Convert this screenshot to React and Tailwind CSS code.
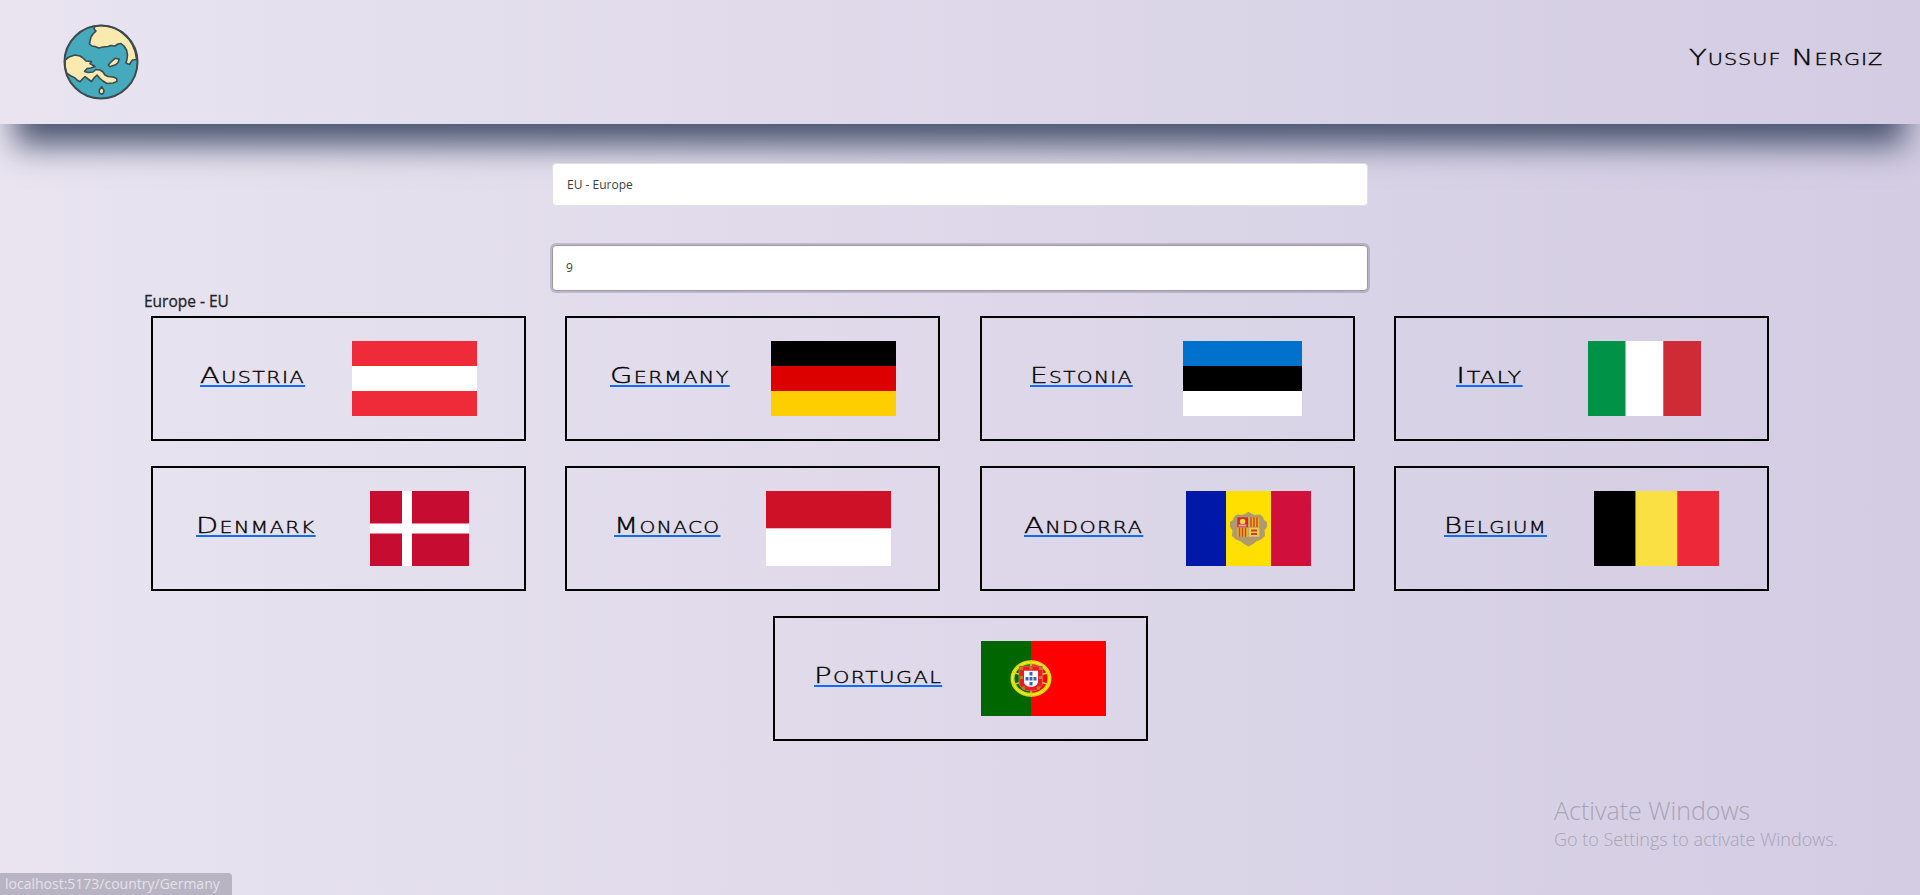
import React from "react";

const FONT = "font-['DejaVu_Sans',sans-serif] font-extralight [font-variant:small-caps] [-webkit-text-stroke:0.35px_black] text-black whitespace-nowrap";

function Globe() {
  return (
    <svg width="76" height="76" viewBox="0 0 76 76" className="block">
      <circle cx="38" cy="38" r="36.5" fill="#45aabb" />
      <g fill="#faeab0" stroke="#3d4a52" strokeWidth="1.6" strokeLinejoin="round">
        <path d="M32 2 L31 5 L33 7 L30 10 L28 13 L27 17 L26.500 20 L29 22 L32 22.500 L36 24 L40 23 L45 22.500 L48 21.500 L52 22 L55 20 L58 19.500 L61 22 L63.500 26 L64.500 31 L64 35 L63 39 L66.500 40.500 L68 38 L69.500 36 L73.500 35.500 A36 36 0 0 0 32 2Z" />
        <path d="M2 36 L6 33 L9 32 L12 31 L17 32 L20 34 L23 37 L28.500 37.500 L27 39.500 L32 42.500 L28 44 L24 44.500 L21.500 47.500 L25 48.500 L30 48 L33 45.500 L37 46 L40 48 L42 51 L45 52.500 L50 53 L53.700 54.500 L54 57.500 L50 59 L44 59.500 L40 57 L37 54.500 L34 51 L31 54 L28.500 57.500 L25 55 L22 52.700 L19.500 55 L17 57.700 L14 56 L12 54 L8 52 L3.700 49.300 A36 36 0 0 1 2 36Z" />
        <path d="M45.300 41 L48 38 L52 34.300 L56.300 35.300 L55 38.500 L53 40.500 L47 42.700Z" />
        <path d="M36.300 66 L38.700 62.700 L41 66.700 L40.500 69 L38.700 70.300 L36.300 68.700Z" />
      </g>
      <circle cx="38" cy="38" r="36.5" fill="none" stroke="#3d4a52" strokeWidth="2" />
    </svg>
  );
}

const Stripes = ({ colors, w = 125 }) => (
  <svg width={w} height="75" viewBox={`0 0 ${w} 75`} className="block shrink-0">
    {colors.map((c, i) => (
      <rect key={i} x="0" y={i * 25} width={w} height="25" fill={c} />
    ))}
  </svg>
);

const Bars = ({ colors, w = 125 }) => (
  <svg width={w} height="75" viewBox={`0 0 ${w} 75`} className="block shrink-0">
    {colors.map((c, i) => (
      <rect key={i} x={(i * w) / colors.length} y="0" width={w / colors.length} height="75" fill={c} />
    ))}
  </svg>
);

const Denmark = () => (
  <svg width="99" height="75" viewBox="0 0 99 75" className="block shrink-0">
    <rect width="99" height="75" fill="#c60c30" />
    <rect x="32" width="10" height="75" fill="#fff" />
    <rect y="32.500" width="99" height="10" fill="#fff" />
  </svg>
);

const Monaco = () => (
  <svg width="125" height="75" viewBox="0 0 125 75" className="block shrink-0">
    <rect width="125" height="37.500" fill="#ce1126" />
    <rect y="37.500" width="125" height="37.500" fill="#fff" />
  </svg>
);

const Andorra = () => (
  <svg width="125" height="75" viewBox="0 0 125 75" className="block shrink-0">
    <rect width="40" height="75" fill="#0018a8" />
    <rect x="40" width="45" height="75" fill="#fedf00" />
    <rect x="85" width="40" height="75" fill="#d0103a" />
    <path d="M44 31 L47 29 L48 26 L51 23.500 L56 24 L59 23 L62.500 20.700 L66 23 L69 24 L74 23.500 L77 26 L78 29 L81 31 L81 36 L78.500 39 L79 45 L75 48.500 L70 50.500 L67 53 L62.500 55.500 L58 53 L55 50.500 L50 48.500 L46 45 L46.500 39 L44 36Z" fill="#ae9a6c" />
    <rect x="51.300" y="26.300" width="10.700" height="10" fill="#d8242c" />
    <circle cx="56.600" cy="30.500" r="2.800" fill="#f7d64a" />
    <rect x="52.500" y="33.500" width="8" height="2" fill="#e8a0a0" />
    <rect x="62.700" y="26.300" width="10.700" height="10" fill="#e9b21f" />
    <path d="M65 26.300v10M68 26.300v10M71 26.300v10" stroke="#c8432c" strokeWidth="1.400" />
    <rect x="51.300" y="36.700" width="10.700" height="9" fill="#e9b21f" />
    <path d="M53.500 36.700v9M56.500 36.700v9M59.500 36.700v9" stroke="#c8432c" strokeWidth="1.400" />
    <rect x="62.700" y="36.700" width="10.700" height="9" fill="#efc94c" />
    <path d="M65 39.500h6M65 43h6" stroke="#c8432c" strokeWidth="1.800" />
  </svg>
);

const Portugal = () => (
  <svg width="125" height="75" viewBox="0 0 125 75" className="block shrink-0">
    <rect width="50" height="75" fill="#006600" />
    <rect x="50" width="75" height="75" fill="#ff0000" />
    <ellipse cx="50" cy="37.500" rx="18.500" ry="16.300" fill="none" stroke="#d8d800" strokeWidth="4" />
    <ellipse cx="50" cy="37.500" rx="18.500" ry="16.300" fill="none" stroke="#f3ee50" strokeWidth="1" />
    <path d="M32 31q18 8 36 0M32 44q18-8 36 0M50 19v37" fill="none" stroke="#d8d800" strokeWidth="1.500" />
    <path d="M38 25h23.700v16c0 5.500-5 9-11.850 9s-11.850-3.500-11.850-9z" fill="#ed1c24" stroke="#c9a0a0" strokeWidth=".6" />
    <path d="M43 29.700h14v11c0 3-3 5-7 5s-7-2-7-5z" fill="#fff" />
    <g fill="#3a62b8">
      <rect x="48.500" y="31" width="3" height="3.500" />
      <rect x="44.500" y="36" width="3" height="3.500" />
      <rect x="48.500" y="36" width="3" height="3.500" />
      <rect x="52.500" y="36" width="3" height="3.500" />
      <rect x="48.500" y="41" width="3" height="3.500" />
    </g>
    <g fill="#b8860b">
      <rect x="39" y="26" width="3" height="3" />
      <rect x="48.500" y="25.500" width="3" height="3" />
      <rect x="58" y="26" width="3" height="3" />
      <rect x="39" y="35" width="3" height="3" />
      <rect x="58" y="35" width="3" height="3" />
      <rect x="41" y="45.500" width="3" height="3" />
      <rect x="56" y="45.500" width="3" height="3" />
    </g>
  </svg>
);

const countries = [
  { name: "Austria", width: "w-[105px]", scale: "scale-x-[1.38]", flag: <Stripes colors={["#ef2b3a", "#ffffff", "#ef2b3a"]} /> },
  { name: "Germany", width: "w-[119px]", scale: "scale-x-[1.38]", flag: <Stripes colors={["#000000", "#dd0000", "#ffce00"]} /> },
  { name: "Estonia", width: "w-[103px] mr-[2px]", scale: "scale-x-[1.34]", flagGap: "mr-[3px]", flag: <Stripes w={119} colors={["#0072ce", "#000000", "#ffffff"]} /> },
  { name: "Italy", width: "w-[66px] mr-[6px]", scale: "scale-x-[1.48]", flagGap: "mr-[6px]", flag: <Bars w={113} colors={["#009246", "#ffffff", "#ce2b37"]} /> },
  { name: "Denmark", width: "w-[119px] mr-[11px]", scale: "scale-x-[1.37]", flagGap: "mr-[12px]", flag: <Denmark /> },
  { name: "Monaco", width: "w-[105px]", scale: "scale-x-[1.34]", flag: <Monaco /> },
  { name: "Andorra", width: "w-[120px]", scale: "scale-x-[1.38]", flag: <Andorra /> },
  { name: "Belgium", width: "w-[103px]", scale: "scale-x-[1.31]", flag: <Bars colors={["#000000", "#fae042", "#ed2939"]} /> },
  { name: "Portugal", width: "w-[128px]", scale: "scale-x-[1.39]", flag: <Portugal /> },
];

function Card({ name, width, scale, flag, flagGap = "" }) {
  return (
    <div className="w-[375px] h-[125px] border-2 border-black flex items-center justify-evenly">
      <a href="#" className={`${width} block shrink-0 -mt-[5px]`}>
        <span className={`${FONT} ${scale} inline-block origin-left text-[21px] leading-[27px] tracking-[1px] underline decoration-[#0d6efd] decoration-2 underline-offset-[2px]`}>
          {name}
        </span>
      </a>
      <div className={`shrink-0 ${flagGap}`}>{flag}</div>
    </div>
  );
}

export default function App() {
  return (
    <div className="min-h-[895px] bg-[linear-gradient(to_right,#e9e4f0,#d3cce3)] font-['Open_Sans',sans-serif] text-[#212529] relative overflow-hidden">
      <header className="h-[124px] flex items-center justify-between pl-[63px] pr-[37px] shadow-[0_36px_30px_-15px_#4a5570]">
        <Globe />
        <div className="w-[194px] -mt-[7px]">
          <span className={`${FONT} inline-block origin-left scale-x-[1.39] text-[21px] tracking-[0.67px]`}>Yussuf Nergiz</span>
        </div>
      </header>

      <main className="flex flex-col items-center">
        <div className="mt-[39px] w-[816px] h-[43px] bg-white rounded-[4px] border border-[#dee2e6] px-[14px] flex items-center text-[12px] text-[#3a3f45]">
          EU - Europe
        </div>
        <div className="mt-[39px] w-[816px] h-[46px] bg-white rounded-[4px] border border-[#9a9a9a] shadow-[0_0_0_2px_rgba(120,115,140,0.35)] px-[13px] flex items-center text-[12px] text-[#3a3f45]">
          9
        </div>
      </main>

      <div className="ml-[144px] text-[15.500px] leading-[20px] text-[#212529] [-webkit-text-stroke:0.3px_#212529]">Europe - EU</div>

      <section className="mx-auto w-[1618px] flex flex-wrap justify-center gap-x-[39.33px] gap-y-[25px] mt-[5px]">
        {countries.map((c) => (
          <Card key={c.name} {...c} />
        ))}
      </section>

      <div className="absolute left-[1554px] top-[795px] text-[#a8a4b6] font-light">
        <div className="text-[25px] leading-[30px]">Activate Windows</div>
        <div className="text-[18px] leading-[28px]">Go to Settings to activate Windows.</div>
      </div>

      <div className="absolute left-0 bottom-0 w-[232px] h-[22px] bg-[#b8b4c3] rounded-tr-[4px] pl-[5px] text-[14px] leading-[22px] text-[#e4e2ea] whitespace-nowrap overflow-hidden">
        localhost:5173/country/Germany
      </div>
    </div>
  );
}
